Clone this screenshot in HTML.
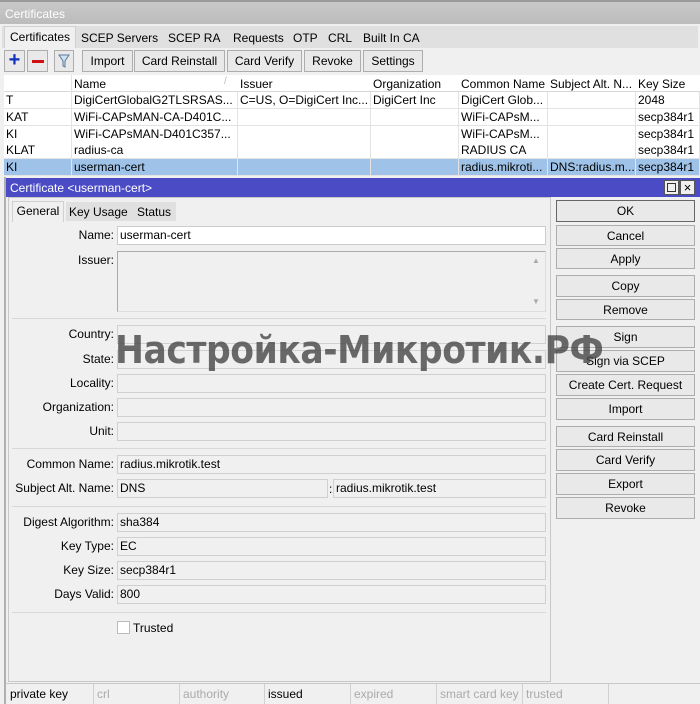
<!DOCTYPE html>
<html><head><meta charset="utf-8"><style>
*{box-sizing:border-box;margin:0;padding:0}
body{width:700px;height:704px;overflow:hidden;background:#f0f0f0;font-family:"Liberation Sans",sans-serif;font-size:12px;color:#000;position:relative}
.a{position:absolute;white-space:nowrap}
.btn{position:absolute;border:1px solid #adadad;background:#e9e9e9;text-align:center;line-height:20px;font-size:12px}
.inp{position:absolute;height:19px;border:1px solid #d0d0d0;background:#f0f0f0;line-height:17px;padding-left:2px}
.lbl{position:absolute;right:586px;text-align:right;line-height:19px}
.sep{position:absolute;left:12px;width:534px;height:1px;background:#d8d8d8}
.row{position:absolute;left:4px;width:696px;height:17px;border-bottom:1px solid #e3e3e3;background:#fff}
.c{position:absolute;top:0;line-height:16px;padding-left:2px;overflow:hidden;border-right:1px solid #e3e3e3;height:16px}
.sb{position:absolute;top:684px;height:20px;line-height:20px;padding-left:3px;border-right:1px solid #d0d0d0;color:#aaa}
</style></head><body>
<div class="a" style="left:0;top:0;width:700px;height:24px;background:linear-gradient(#c8c8c8,#bcbcbc);border-top:2px solid #9a9a9a"></div>
<div class="a" style="left:5px;top:7px;color:#fff">Certificates</div>
<div class="a" style="left:2px;top:26px;width:696px;height:22px;background:#e0e0e0"></div>
<div class="a" style="left:4px;top:26px;width:72px;height:22px;background:#f0f0f0;border:1px solid #d0d0d0;border-bottom:none;line-height:20px;text-align:center">Certificates</div>
<div class="a" style="left:81px;top:31px">SCEP Servers</div>
<div class="a" style="left:168px;top:31px">SCEP RA</div>
<div class="a" style="left:233px;top:31px">Requests</div>
<div class="a" style="left:293px;top:31px">OTP</div>
<div class="a" style="left:328px;top:31px">CRL</div>
<div class="a" style="left:363px;top:31px">Built In CA</div>
<div class="btn" style="left:4px;top:50px;width:21px;height:22px;color:#1030c0;font-weight:bold;font-size:20px;line-height:18px">+</div>
<div class="btn" style="left:27px;top:50px;width:21px;height:22px"><div class="a" style="left:4px;top:9px;width:12px;height:3px;background:#d01010"></div></div>
<div class="btn" style="left:54px;top:50px;width:20px;height:22px"><svg width="18" height="20" style="position:absolute;left:0;top:0"><path d="M4 4h10l-4 6v6l-2-1v-5z" fill="#cfe0f0" stroke="#5a7a9a"/></svg></div>
<div class="btn" style="left:82px;top:50px;width:51px;height:22px">Import</div>
<div class="btn" style="left:134px;top:50px;width:91px;height:22px">Card Reinstall</div>
<div class="btn" style="left:227px;top:50px;width:75px;height:22px">Card Verify</div>
<div class="btn" style="left:304px;top:50px;width:57px;height:22px">Revoke</div>
<div class="btn" style="left:363px;top:50px;width:60px;height:22px">Settings</div>
<div class="a" style="left:4px;top:75px;width:696px;height:17px;background:#fff;border-bottom:1px solid #d8d8d8"></div>
<div class="a" style="left:74px;top:77px">Name</div><div class="a" style="left:224px;top:76px;color:#bbb;font-size:10px">/</div>
<div class="a" style="left:240px;top:77px">Issuer</div>
<div class="a" style="left:373px;top:77px">Organization</div>
<div class="a" style="left:461px;top:77px">Common Name</div>
<div class="a" style="left:550px;top:77px">Subject Alt. N...</div>
<div class="a" style="left:638px;top:77px">Key Size</div>
<div class="a" style="left:71px;top:75px;width:1px;height:100px;background:#e3e3e3"></div>
<div class="row" style="top:92px"><div class="c" style="left:0;width:68px">T</div><div class="c" style="left:68px;width:166px">DigiCertGlobalG2TLSRSAS...</div><div class="c" style="left:234px;width:133px">C=US, O=DigiCert Inc...</div><div class="c" style="left:367px;width:88px">DigiCert Inc</div><div class="c" style="left:455px;width:89px">DigiCert Glob...</div><div class="c" style="left:544px;width:88px"></div><div class="c" style="left:632px;width:64px">2048</div></div>
<div class="row" style="top:109px"><div class="c" style="left:0;width:68px">KAT</div><div class="c" style="left:68px;width:166px">WiFi-CAPsMAN-CA-D401C...</div><div class="c" style="left:234px;width:133px"></div><div class="c" style="left:367px;width:88px"></div><div class="c" style="left:455px;width:89px">WiFi-CAPsM...</div><div class="c" style="left:544px;width:88px"></div><div class="c" style="left:632px;width:64px">secp384r1</div></div>
<div class="row" style="top:126px"><div class="c" style="left:0;width:68px">KI</div><div class="c" style="left:68px;width:166px">WiFi-CAPsMAN-D401C357...</div><div class="c" style="left:234px;width:133px"></div><div class="c" style="left:367px;width:88px"></div><div class="c" style="left:455px;width:89px">WiFi-CAPsM...</div><div class="c" style="left:544px;width:88px"></div><div class="c" style="left:632px;width:64px">secp384r1</div></div>
<div class="row" style="top:142px"><div class="c" style="left:0;width:68px">KLAT</div><div class="c" style="left:68px;width:166px">radius-ca</div><div class="c" style="left:234px;width:133px"></div><div class="c" style="left:367px;width:88px"></div><div class="c" style="left:455px;width:89px">RADIUS CA</div><div class="c" style="left:544px;width:88px"></div><div class="c" style="left:632px;width:64px">secp384r1</div></div>
<div class="row" style="top:159px;background:#9fc3e8"><div class="c" style="left:0;width:68px">KI</div><div class="c" style="left:68px;width:166px">userman-cert</div><div class="c" style="left:234px;width:133px"></div><div class="c" style="left:367px;width:88px"></div><div class="c" style="left:455px;width:89px">radius.mikroti...</div><div class="c" style="left:544px;width:88px">DNS:radius.m...</div><div class="c" style="left:632px;width:64px">secp384r1</div></div>
<div class="a" style="left:4px;top:177px;width:696px;height:527px;background:#f0f0f0;border-left:2px solid #b0b0b0"></div>
<div class="a" style="left:6px;top:178px;width:694px;height:19px;background:#4b4bc6"></div>
<div class="a" style="left:10px;top:181px;color:#fff">Certificate &lt;userman-cert&gt;</div>
<div class="a" style="left:664px;top:180px;width:15px;height:15px;background:#f0f0f0;border:1px solid #555"><div class="a" style="left:2px;top:2px;width:9px;height:9px;border:1px solid #333"></div></div>
<div class="a" style="left:680px;top:180px;width:15px;height:15px;background:#f0f0f0;border:1px solid #555;text-align:center;line-height:13px;font-size:13px">×</div>
<div class="a" style="left:8px;top:197px;width:543px;height:485px;border:1px solid #c8c8c8"></div>
<div class="a" style="left:66px;top:202px;width:110px;height:19px;background:#e0e0e0"></div>
<div class="a" style="left:12px;top:201px;width:52px;height:21px;background:#f0f0f0;border:1px solid #d0d0d0;border-bottom:none;text-align:center;line-height:19px">General</div>
<div class="a" style="left:69px;top:205px">Key Usage</div>
<div class="a" style="left:137px;top:205px">Status</div>
<div class="lbl" style="top:226px">Name:</div><div class="inp" style="left:117px;top:226px;width:429px;background:#fff;border-color:#ccc">userman-cert</div>
<div class="lbl" style="top:251px">Issuer:</div><div class="inp" style="left:117px;top:251px;width:429px;height:61px;border-color:#aaa #ddd #ddd #aaa"></div>
<div class="a" style="left:532px;top:256px;color:#aaa;font-size:8px">▲</div><div class="a" style="left:532px;top:297px;color:#aaa;font-size:8px">▼</div>
<div class="sep" style="top:318px"></div>
<div class="lbl" style="top:325px">Country:</div><div class="inp" style="left:117px;top:325px;width:429px"></div>
<div class="lbl" style="top:350px">State:</div><div class="inp" style="left:117px;top:350px;width:429px"></div>
<div class="lbl" style="top:374px">Locality:</div><div class="inp" style="left:117px;top:374px;width:429px"></div>
<div class="lbl" style="top:398px">Organization:</div><div class="inp" style="left:117px;top:398px;width:429px"></div>
<div class="lbl" style="top:422px">Unit:</div><div class="inp" style="left:117px;top:422px;width:429px"></div>
<div class="sep" style="top:448px"></div>
<div class="lbl" style="top:455px">Common Name:</div><div class="inp" style="left:117px;top:455px;width:429px">radius.mikrotik.test</div>
<div class="lbl" style="top:479px">Subject Alt. Name:</div><div class="inp" style="left:117px;top:479px;width:211px">DNS</div><div class="a" style="left:329px;top:482px">:</div><div class="inp" style="left:333px;top:479px;width:213px">radius.mikrotik.test</div>
<div class="sep" style="top:506px"></div>
<div class="lbl" style="top:513px">Digest Algorithm:</div><div class="inp" style="left:117px;top:513px;width:429px">sha384</div>
<div class="lbl" style="top:537px">Key Type:</div><div class="inp" style="left:117px;top:537px;width:429px">EC</div>
<div class="lbl" style="top:561px">Key Size:</div><div class="inp" style="left:117px;top:561px;width:429px">secp384r1</div>
<div class="lbl" style="top:585px">Days Valid:</div><div class="inp" style="left:117px;top:585px;width:429px">800</div>
<div class="sep" style="top:612px"></div>
<div class="a" style="left:117px;top:621px;width:13px;height:13px;background:#fff;border:1px solid #bbb"></div>
<div class="a" style="left:133px;top:621px">Trusted</div>
<div class="btn" style="left:556px;top:200px;width:139px;height:22px;border-color:#666">OK</div>
<div class="btn" style="left:556px;top:225px;width:139px;height:21px">Cancel</div>
<div class="btn" style="left:556px;top:248px;width:139px;height:21px">Apply</div>
<div class="btn" style="left:556px;top:275px;width:139px;height:22px">Copy</div>
<div class="btn" style="left:556px;top:299px;width:139px;height:21px">Remove</div>
<div class="btn" style="left:556px;top:326px;width:139px;height:22px">Sign</div>
<div class="btn" style="left:556px;top:350px;width:139px;height:22px">Sign via SCEP</div>
<div class="btn" style="left:556px;top:374px;width:139px;height:22px">Create Cert. Request</div>
<div class="btn" style="left:556px;top:398px;width:139px;height:22px">Import</div>
<div class="btn" style="left:556px;top:426px;width:139px;height:21px">Card Reinstall</div>
<div class="btn" style="left:556px;top:449px;width:139px;height:22px">Card Verify</div>
<div class="btn" style="left:556px;top:473px;width:139px;height:22px">Export</div>
<div class="btn" style="left:556px;top:497px;width:139px;height:22px">Revoke</div>
<div class="a" style="left:6px;top:683px;width:694px;height:1px;background:#c8c8c8"></div>
<div class="sb" style="left:7px;width:87px;color:#000">private key</div>
<div class="sb" style="left:94px;width:86px">crl</div>
<div class="sb" style="left:180px;width:85px">authority</div>
<div class="sb" style="left:265px;width:86px;color:#000">issued</div>
<div class="sb" style="left:351px;width:86px">expired</div>
<div class="sb" style="left:437px;width:86px">smart card key</div>
<div class="sb" style="left:523px;width:86px">trusted</div>
<div class="a" style="left:115px;top:326px;font-family:'DejaVu Sans',sans-serif;font-size:38px;font-weight:bold;color:rgba(70,70,70,0.8);letter-spacing:-0.5px;line-height:48px;transform:scaleX(0.91);transform-origin:0 0">Настройка-Микротик.РФ</div>
</body></html>
